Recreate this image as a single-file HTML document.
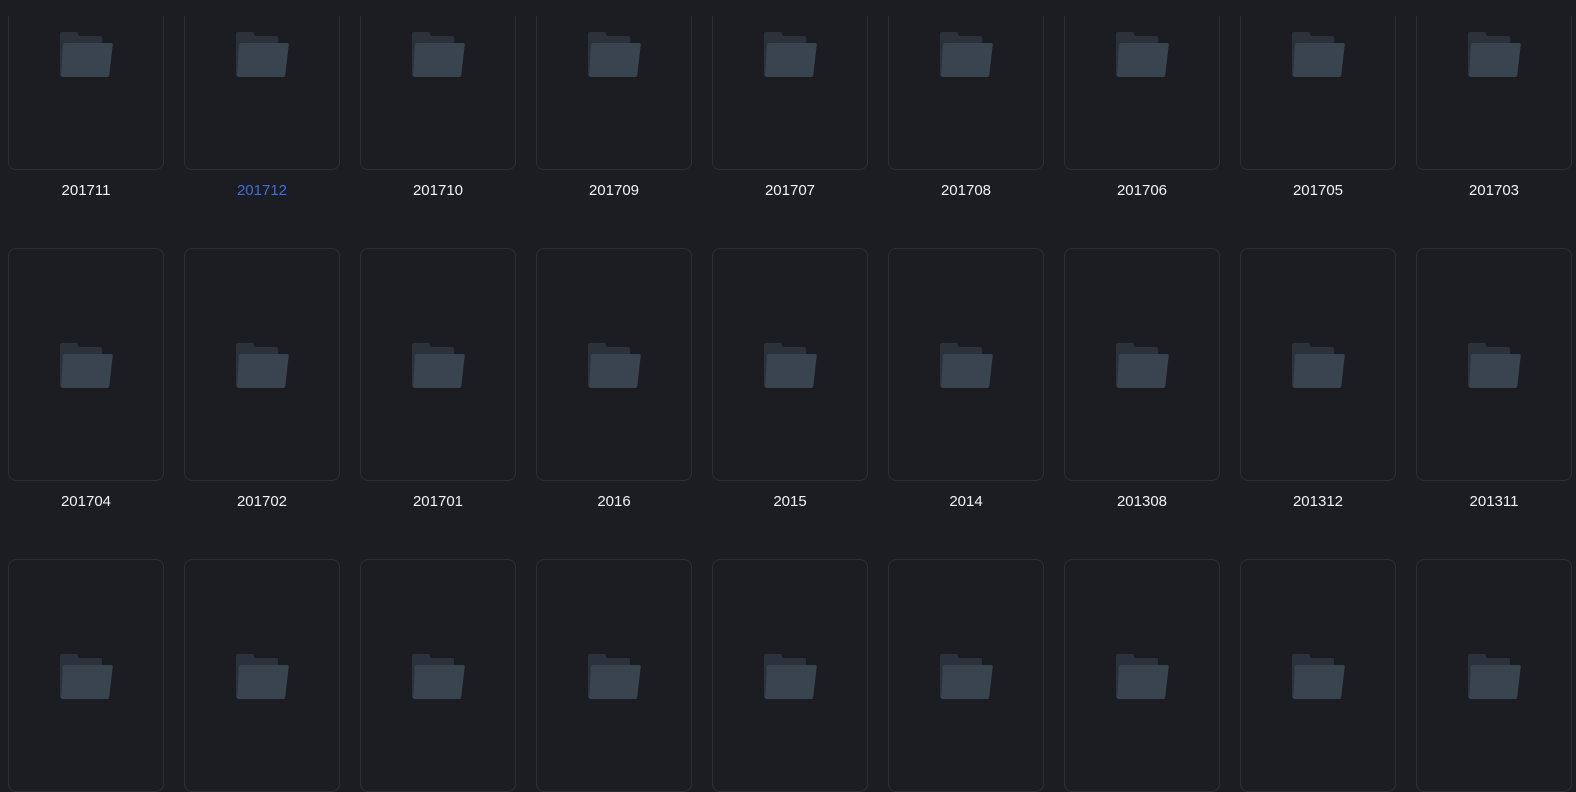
<!DOCTYPE html>
<html><head><style>
html,body{margin:0;padding:0;background:#1b1d22;width:1576px;height:732px;overflow:hidden;font-family:"Liberation Sans",sans-serif}
.cell{position:absolute;width:156px}
.card{width:154px;height:231px;border:1px solid #2b2e34;border-radius:8px;position:relative;background:#1b1d22}
.card svg{position:absolute;left:51px;top:94px}
.lbl{position:absolute;top:245px;width:156px;text-align:center;color:#f2f3f5;font-size:15px;line-height:18px}
.top{position:absolute;left:0;top:0;width:1576px;height:16px;background:#1b1d22;z-index:5}
</style></head><body>
<div class="top"></div>
<div id="g"></div>
<script>
var rows=[["201711","201712","201710","201709","201707","201708","201706","201705","201703"],["201704","201702","201701","2016","2015","2014","201308","201312","201311"],["","","","","","","","",""]];
var svg='<svg width="54" height="46" viewBox="0 0 54 46"><path d="M0 2Q0 0 2 0H17L19 4H40Q42 4 42 6V44H0Z" fill="#2b323b"/><path d="M5 11H51Q53 11 52.7 13L49.3 43Q49 45 47 45H3Q1 45 1.2 43L3 13Q3.2 11 5 11Z" fill="#3a444e"/></svg>';
var h='';
rows.forEach(function(r,i){r.forEach(function(t,j){
var top=-63+i*311,left=8+j*176;
h+='<div class="cell" style="left:'+left+'px;top:'+top+'px"><div class="card">'+svg+'</div><div class="lbl"'+(t=="201712"?' style="color:#3d6fd9"':'')+'>'+t+'</div></div>';});});
document.getElementById('g').innerHTML=h;
</script>
</body></html>
